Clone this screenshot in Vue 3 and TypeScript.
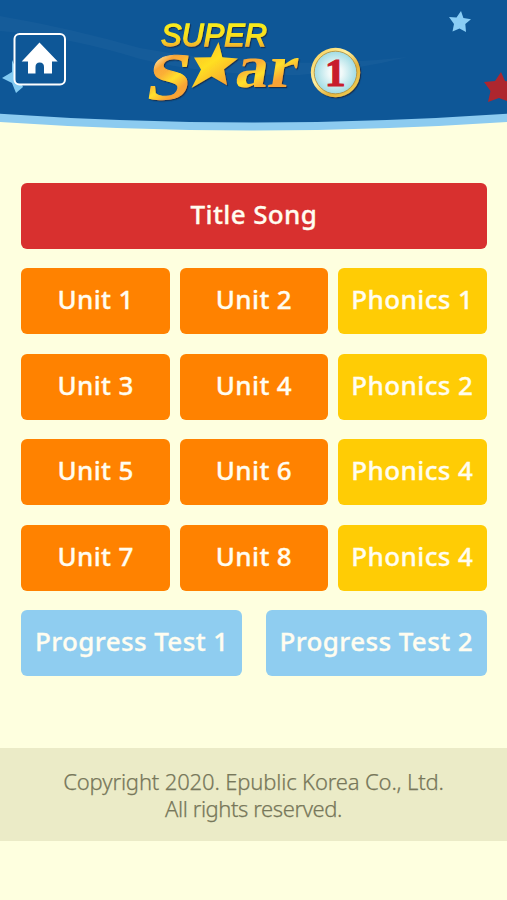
<script setup lang="ts">
interface MenuItem {
  label: string
  kind: 'song' | 'unit' | 'phonics' | 'test'
}

const items: MenuItem[] = [
  { label: 'Title Song', kind: 'song' },
  { label: 'Unit 1', kind: 'unit' },
  { label: 'Unit 2', kind: 'unit' },
  { label: 'Phonics 1', kind: 'phonics' },
  { label: 'Unit 3', kind: 'unit' },
  { label: 'Unit 4', kind: 'unit' },
  { label: 'Phonics 2', kind: 'phonics' },
  { label: 'Unit 5', kind: 'unit' },
  { label: 'Unit 6', kind: 'unit' },
  { label: 'Phonics 4', kind: 'phonics' },
  { label: 'Unit 7', kind: 'unit' },
  { label: 'Unit 8', kind: 'unit' },
  { label: 'Phonics 4', kind: 'phonics' },
]

const tests: MenuItem[] = [
  { label: 'Progress Test 1', kind: 'test' },
  { label: 'Progress Test 2', kind: 'test' },
]
</script>

<template>
  <div class="page">
    <header class="header">
      <svg class="banner" viewBox="0 0 507 135" width="507" height="135">
        <defs>
          <linearGradient id="superFill" x1="0" y1="0" x2="0" y2="1">
            <stop offset="0.2" stop-color="#f8ec1c" />
            <stop offset="0.6" stop-color="#f9dc20" />
            <stop offset="0.85" stop-color="#f0a830" />
          </linearGradient>
          <linearGradient id="letterFill" x1="0" y1="0" x2="0.5" y2="1">
            <stop offset="0.2" stop-color="#fff0b8" />
            <stop offset="0.38" stop-color="#f9a638" />
            <stop offset="0.5" stop-color="#fbb036" />
            <stop offset="0.66" stop-color="#ffe02c" />
            <stop offset="0.85" stop-color="#f9a436" />
          </linearGradient>
          <linearGradient id="starFill" x1="0" y1="0" x2="0.7" y2="1">
            <stop offset="0" stop-color="#fbb52e" />
            <stop offset="0.5" stop-color="#ffdf22" />
            <stop offset="1" stop-color="#f7a032" />
          </linearGradient>
          <linearGradient id="ringFill" x1="0" y1="0" x2="1" y2="1">
            <stop offset="0" stop-color="#f5c94b" />
            <stop offset="0.4" stop-color="#fff0a0" />
            <stop offset="0.65" stop-color="#e5b53c" />
            <stop offset="1" stop-color="#f5d75a" />
          </linearGradient>
          <radialGradient id="discFill">
            <stop offset="0.3" stop-color="#f2fafa" />
            <stop offset="1" stop-color="#a0dce4" />
          </radialGradient>
          <filter id="logoShadow" x="-10%" y="-10%" width="125%" height="125%">
            <feDropShadow dx="1.1" dy="1.2" stdDeviation="0.7" flood-color="#16283c" flood-opacity="0.8" />
          </filter>
        </defs>
        <path d="M0 0H507V122Q380 130.5 253 130.5Q126 130.5 0 122Z" fill="#8ccbf0" />
        <path d="M0 0H507V113.8Q380 122.5 253 122.5Q126 122.5 0 113.8Z" fill="#0e5797" />
        <path d="M0 16Q70 28 140 48Q270 72 408 57Q360 69 300 75Q210 76 140 59Q70 37 0 31Z" fill="#fff" fill-opacity="0.03" />
        <path d="M12 60L17 71L29 70L20 80L23 87L16 93L12 83L2 78L12 72Z" fill="#82caf2" />
        <path d="M461 11L463.4 18L471 19.3L465.3 24L466 32L459.5 28.5L452.5 31.5L454 24L449 17L456.5 17.5Z" fill="#8acdf5" />
        <path d="M501 72L505 81L515 82L507 91L510 102L499 98L488 102L490.5 91L484 82L495 81Z" fill="#ae262e" />
        <g class="home">
          <rect x="14.5" y="34" width="50.5" height="50.5" rx="5" fill="#0e5797" stroke="#fff" stroke-width="2" />
          <path d="M39.5 42.5L57.7 61.5H52V73.5H44V67Q44 62.5 39.7 62.5Q35.5 62.5 35.5 67V73.5H28V61.5H21.7Z" fill="#fff" />
        </g>
        <g filter="url(#logoShadow)">
          <text x="161" y="46.3" class="super" textLength="106" lengthAdjust="spacingAndGlyphs" fill="url(#superFill)">SUPER</text>
          <text transform="translate(145 100) rotate(-3) skewX(-12)" class="big-s" textLength="43" lengthAdjust="spacingAndGlyphs" fill="url(#letterFill)">S</text>
          <text transform="translate(233.5 86.5) skewX(-9)" class="ar" textLength="62" lengthAdjust="spacingAndGlyphs" fill="url(#letterFill)">ar</text>
          <path d="M218.5 42L222.3 57.3L238 58.5L224 69.3L227 85.2L211.5 76.2L191.5 88L201 69.5L194 57.6L211 57.3Z" fill="url(#starFill)" />
          <circle cx="335.5" cy="72.5" r="24.7" fill="url(#ringFill)" />
        </g>
        <circle cx="335.5" cy="72.5" r="21.3" fill="url(#discFill)" stroke="#b08a35" stroke-width="0.8" />
        <text x="325" y="85.5" class="level" textLength="20.5" lengthAdjust="spacingAndGlyphs">1</text>
      </svg>
    </header>

    <main class="menu">
      <div class="grid">
        <button v-for="(item, i) in items" :key="i" class="btn" :class="item.kind">{{ item.label }}</button>
      </div>
      <div class="tests">
        <button v-for="item in tests" :key="item.label" class="btn" :class="item.kind">{{ item.label }}</button>
      </div>
    </main>

    <footer class="footer">
      <p>Copyright 2020. Epublic Korea Co., Ltd.</p>
      <p class="rights">All rights reserved.</p>
    </footer>
  </div>
</template>

<style>
body {
  margin: 0;
  background: #feffdf;
}
</style>

<style scoped>
.page {
  width: 507px;
  height: 900px;
  overflow: hidden;
  background: #feffdf;
  font-family: "Noto Sans", "Open Sans", sans-serif;
}
.header {
  height: 135px;
}
.banner {
  display: block;
}
.super {
  font: italic 400 32px "Liberation Sans", sans-serif;
  stroke: url(#superFill);
  stroke-width: 1.3;
}
.big-s {
  font: bold 65px "Liberation Serif", serif;
  stroke: url(#letterFill);
  stroke-width: 1;
}
.ar {
  font: bold 61px "Liberation Serif", serif;
}
.level {
  font: bold 40px "Liberation Serif", serif;
  fill: #c81c2c;
  stroke: #c81c2c;
  stroke-width: 1.2;
}
.menu {
  padding: 47.5px 20.3px 0 21.2px;
}
.grid {
  display: grid;
  grid-template-columns: repeat(3, 1fr);
  column-gap: 9.5px;
  row-gap: 19.6px;
}
.tests {
  display: grid;
  grid-template-columns: repeat(2, 1fr);
  column-gap: 23.5px;
  margin-top: 19.6px;
}
.btn {
  height: 66px;
  padding: 0 0 4px;
  border: 0;
  border-radius: 6px;
  color: #fffdf0;
  font-family: inherit;
  font-size: 26px;
  font-weight: 500;
  letter-spacing: 0.38px;
  line-height: 36px;
  white-space: nowrap;
  -webkit-text-stroke: 0.3px #fffdf0;
}
.song {
  grid-column: 1 / -1;
  background: #d8302f;
}
.unit {
  background: #ff8200;
}
.phonics {
  background: #ffcc05;
}
.test {
  background: #8fcdf0;
}
.footer {
  box-sizing: border-box;
  height: 93px;
  margin-top: 71.5px;
  padding-top: 20px;
  background: #ebebc7;
  color: #77775a;
  font-size: 22px;
  font-weight: 300;
  letter-spacing: -0.15px;
  line-height: 27px;
  text-align: center;
  -webkit-text-stroke: 0.25px #77775a;
}
.footer p {
  margin: 0;
}
.footer .rights {
  letter-spacing: -0.42px;
}
</style>
